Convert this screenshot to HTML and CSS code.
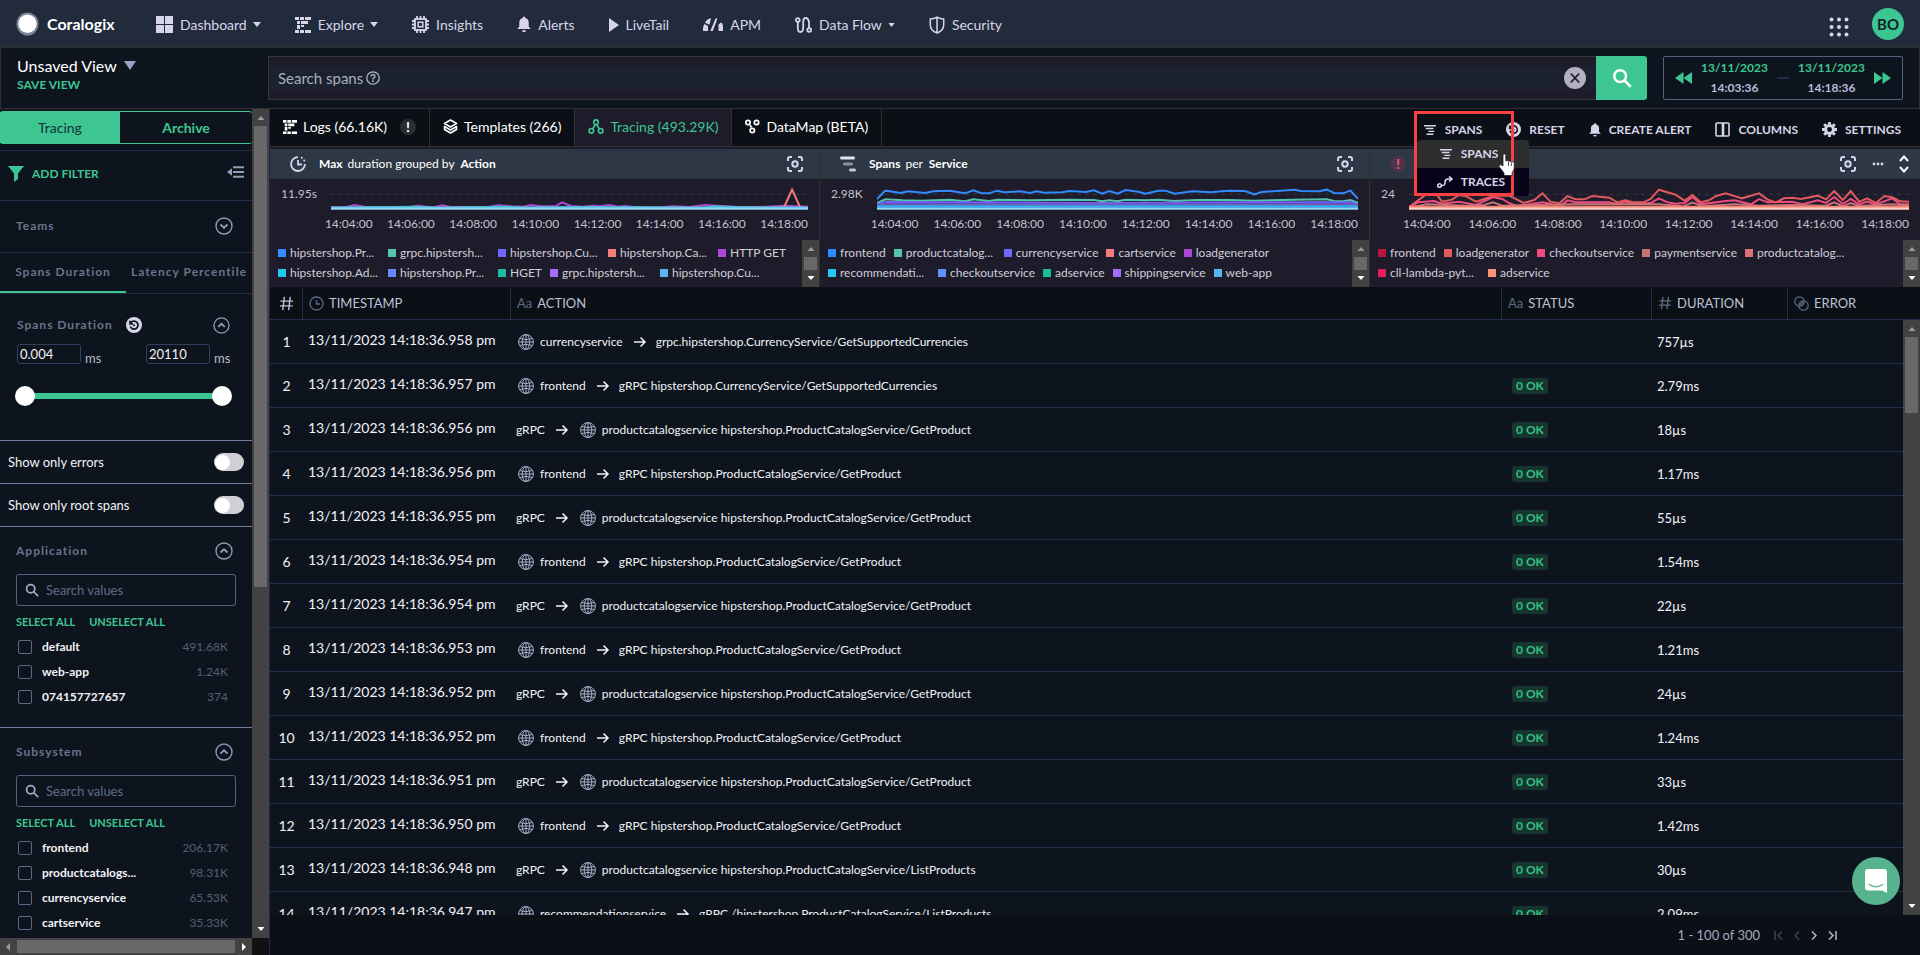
FILE: index.html
```html
<!DOCTYPE html>
<html lang="en">
<head>
<meta charset="utf-8">
<title>Coralogix - Tracing</title>
<link rel="stylesheet" href="styles.css">
</head>
<body>
<svg class="defs" aria-hidden="true">
  <symbol id="i-globe" viewBox="0 0 16 16"><g fill="none" stroke="currentColor"><circle cx="8" cy="8" r="7.400"/><ellipse cx="8" cy="8" rx="3.800" ry="7.400"/><path d="M8 1v14M1 8h14M2 4.600q6 2 12 0M2 11.400q6-2 12 0"/></g></symbol>
  <symbol id="i-arrow" viewBox="0 0 14 12"><path d="M1 6h11M7.500 1.500L12 6l-4.500 4.500" fill="none" stroke="currentColor" stroke-width="1.500"/></symbol>
  <symbol id="i-up" viewBox="0 0 18 18"><g fill="none" stroke="currentColor" stroke-width="1.400"><circle cx="9" cy="9" r="8"/><path d="M5.500 10.500L9 7.300l3.500 3.200" stroke-width="2"/></g></symbol>
  <symbol id="i-search" viewBox="0 0 16 16"><g fill="none" stroke="currentColor" stroke-width="2"><circle cx="6.500" cy="6.500" r="4.700"/><path d="M10 10l5 5"/></g></symbol>
  <symbol id="i-focus" viewBox="0 0 18 18"><g fill="none" stroke="currentColor" stroke-width="2"><path d="M2 6V4a2 2 0 0 1 2-2h2M12 2h2a2 2 0 0 1 2 2v2M16 12v2a2 2 0 0 1-2 2h-2M6 16H4a2 2 0 0 1-2-2v-2"/><circle cx="9" cy="9" r="2.700"/></g></symbol>
  <symbol id="i-logs" viewBox="0 0 16 16"><path fill="currentColor" d="M0 0h4v3H0zM5 0h4v3H5zM10 0h6v3h-6zM2 4h3v3H2zM6 4h7v3H6zM2 8h3v4H2zM6 8h3v2H6zM0 13h4v3H0zM5 13h4v3H5zM10 13h6v3h-6z"/></symbol>
  <symbol id="i-spans" viewBox="0 0 16 14"><path d="M1 2h14M3 5.300h9M6 8.600h7M4 12h8" stroke="currentColor" stroke-width="1.600"/></symbol>
  <symbol id="i-bell" viewBox="0 0 14 16"><path fill="currentColor" d="M7 0a1.300 1.300 0 0 1 1.300 1.500A4.600 4.600 0 0 1 11.700 6v4l2.100 2.500H.2L2.300 10V6a4.600 4.600 0 0 1 3.400-4.500A1.300 1.300 0 0 1 7 0zM5 13.700h4a2 2 0 0 1-4 0z"/></symbol>
  <symbol id="i-reset" viewBox="0 0 16 16"><circle cx="8" cy="8" r="8" fill="#d8d5ea"/><path d="M4.800 5.700A4 4 0 1 1 4.300 9.500M4 3.800v3h3" fill="none" stroke="#11151e" stroke-width="1.700"/><circle cx="8" cy="8.300" r="1" fill="#11151e"/></symbol>
  <symbol id="i-hash" viewBox="0 0 16 16"><path d="M5.700 1L4 15M12 1l-1.700 14M1.500 5.500h13.500M1 10.500h13.500" fill="none" stroke="currentColor" stroke-width="1.500"/></symbol>
  <symbol id="i-tri-up" viewBox="0 0 9 5"><path d="M0 5L4.500 0 9 5z" fill="#9a9a9a"/></symbol>
  <symbol id="i-tri-down" viewBox="0 0 9 5"><path d="M0 0h9L4.500 5z" fill="#fff"/></symbol>
  <symbol id="i-caret" viewBox="0 0 8 5"><path d="M0 0h8L4 5z" fill="currentColor"/></symbol>
</svg>

<header class="topbar">
  <a class="brand" href="#"><svg width="23" height="24" viewBox="0 0 23 24"><ellipse cx="11.500" cy="12" rx="11" ry="11.500" fill="#7b8492"/><circle cx="11.500" cy="11.800" r="9.200" fill="#fff"/></svg><span>Coralogix</span></a>
  <nav class="nav">
    <a href="#"><svg width="17" height="17" viewBox="0 0 17 17"><path fill="currentColor" d="M0 0h8v8H0zM9 0h8v8H9zM0 9h8v8H0zM9 9h8v8H9z"/></svg><span>Dashboard</span><svg class="caret" width="8" height="5"><use href="#i-caret"/></svg></a>
    <a href="#"><svg width="16" height="16"><use href="#i-logs"/></svg><span>Explore</span><svg class="caret" width="8" height="5"><use href="#i-caret"/></svg></a>
    <a href="#"><svg width="17" height="17" viewBox="0 0 17 17"><g fill="none" stroke="currentColor" stroke-width="1.800"><rect x="3" y="3" width="11" height="11"/><path d="M5 0v3M8.500 0v3M12 0v3M5 14v3M8.500 14v3M12 14v3M0 5h3M0 8.500h3M0 12h3M14 5h3M14 8.500h3M14 12h3"/></g><rect x="6.200" y="6.200" width="4.600" height="4.600" fill="none" stroke="currentColor" stroke-width="1.500"/></svg><span>Insights</span></a>
    <a href="#"><svg width="14" height="17"><use href="#i-bell"/></svg><span>Alerts</span></a>
    <a href="#"><svg width="10" height="14" viewBox="0 0 10 14"><path fill="currentColor" d="M0 0l10 7-10 7z"/></svg><span>LiveTail</span></a>
    <a href="#"><svg width="20" height="16" viewBox="0 0 20 16"><path fill="currentColor" d="M0 14a13 13 0 0 1 1.300-7L5 9v5zM2 5.800A8 8 0 0 1 8 1.200L6.500 7.800zM12.500 1.500h2L9.800 14H7.300zM15.500 7.500l3-2.200A12 12 0 0 1 20 14h-4.500z"/></svg><span>APM</span></a>
    <a href="#"><svg width="17" height="16" viewBox="0 0 17 16"><g fill="none" stroke="currentColor" stroke-width="1.800"><circle cx="2.800" cy="3" r="1.900"/><circle cx="14.200" cy="13" r="1.900"/><path d="M2.800 5v6q0 4 2.600 4T8.200 11V5q0-4 2.500-4t3.300 4v6"/></g></svg><span>Data Flow</span><svg class="caret" width="7" height="4" viewBox="0 0 8 5"><use href="#i-caret"/></svg></a>
    <a href="#"><svg width="16" height="18" viewBox="0 0 16 18"><path d="M8 1.200Q11 3 14.700 3v6q0 5.500-6.700 8Q1.300 14.500 1.300 9V3Q5 3 8 1.200zM8 1v16" fill="none" stroke="currentColor" stroke-width="1.500"/></svg><span>Security</span></a>
  </nav>
  <button class="apps" aria-label="Apps"><svg width="20" height="20" viewBox="0 0 20 20" fill="#d8d5ea"><circle cx="2.500" cy="2.500" r="2"/><circle cx="10" cy="2.500" r="2"/><circle cx="17.500" cy="2.500" r="2"/><circle cx="2.500" cy="10" r="2"/><circle cx="10" cy="10" r="2"/><circle cx="17.500" cy="10" r="2"/><circle cx="2.500" cy="17.500" r="2"/><circle cx="10" cy="17.500" r="2"/><circle cx="17.500" cy="17.500" r="2"/></svg></button>
  <button class="avatar">BO</button>
</header>

<section class="querybar">
  <div class="view">
    <button class="view-name">Unsaved View <svg width="12" height="9" viewBox="0 0 12 9"><path d="M0 0h12L6 9z" fill="#99a3c2"/></svg></button>
    <button class="save">SAVE VIEW</button>
  </div>
  <div class="search">
    <div class="search-inner">
      <input type="text" aria-label="Search spans" placeholder="Search spans">
      <svg width="14" height="14" viewBox="0 0 14 14"><g fill="none" stroke="#b4b9cc" stroke-width="1.300"><circle cx="7" cy="7" r="6.200"/><path d="M5 5.500Q5 3.600 7 3.600T9 5.400Q9 6.500 7 7.300V8.500"/></g><circle cx="7" cy="10.200" r=".9" fill="#b4b9cc"/></svg>
      <button class="clear" aria-label="Clear"><svg width="22" height="22" viewBox="0 0 22 22"><circle cx="11" cy="11" r="11" fill="#b2afc3"/><path d="M6.800 6.500l8.400 9M15.200 6.500l-8.400 9" stroke="#1c1c28" stroke-width="1.800"/></svg></button>
    </div>
  </div>
  <button class="go" aria-label="Search"><svg width="20" height="20" viewBox="0 0 16 16"><use href="#i-search"/></svg></button>
  <div class="range">
    <button aria-label="Earlier"><svg width="17" height="12" viewBox="0 0 17 12"><path d="M8.500 0v12L0 6zM17 0v12L8.500 6z" fill="#3dc691"/></svg></button>
    <div class="stamp"><span class="date">13/11/2023</span><span>14:03:36</span></div>
    <i class="dash"></i>
    <div class="stamp"><span class="date">13/11/2023</span><span>14:18:36</span></div>
    <button aria-label="Later"><svg width="17" height="12" viewBox="0 0 17 12"><path d="M0 0v12l8.500-6zM8.500 0v12L17 6z" fill="#3dc691"/></svg></button>
  </div>
</section>

<div class="workspace">
  <aside class="sidebar">
    <div class="filters">
      <div class="modes"><button class="on">Tracing</button><button>Archive</button></div>
      <div class="addrow">
        <button class="add"><svg width="16" height="16" viewBox="0 0 16 16"><path d="M0 0h16L10 7.500V13l-4 3V7.500z" fill="#3dc691"/></svg>ADD FILTER</button>
        <button aria-label="Collapse"><svg width="17" height="12" viewBox="0 0 17 12"><path d="M5 2.200v7.600L0 6z" fill="#8f9bb8"/><path d="M6 1.200h11M6 6h11M6 10.800h11" stroke="#8f9bb8" stroke-width="2"/></svg></button>
      </div>
      <div class="teams"><h3>Teams</h3><button aria-label="Expand"><svg class="flip" width="18" height="18"><use href="#i-up"/></svg></button></div>
      <div class="dtabs"><button class="on">Spans Duration</button><button>Latency Percentile</button></div>
      <div class="duration">
        <div class="dhead"><h3>Spans Duration</h3><button aria-label="Reset duration"><svg width="16" height="16"><use href="#i-reset"/></svg></button><button class="end" aria-label="Collapse"><svg width="17" height="17" viewBox="0 0 18 18"><use href="#i-up"/></svg></button></div>
        <div class="dinputs"><label><input type="text" value="0.004">ms</label><label><input type="text" value="20110">ms</label></div>
        <div class="slider"><input type="range" min="0" max="100" value="0" aria-label="Minimum duration"><input type="range" min="0" max="100" value="100" aria-label="Maximum duration"></div>
      </div>
      <label class="switch">Show only errors<input type="checkbox"></label>
      <label class="switch">Show only root spans<input type="checkbox"></label>
      <section class="facet">
        <div class="fhead"><h3>Application</h3><button aria-label="Collapse"><svg width="18" height="18"><use href="#i-up"/></svg></button></div>
        <div class="fsearch"><svg width="14" height="14" viewBox="0 0 16 16"><use href="#i-search"/></svg><input type="text" placeholder="Search values" aria-label="Search applications"></div>
        <div class="fsel"><button>SELECT ALL</button><button>UNSELECT ALL</button></div>
        <label class="opt"><input type="checkbox"><span>default</span><em>491.68K</em></label>
        <label class="opt"><input type="checkbox"><span>web-app</span><em>1.24K</em></label>
        <label class="opt"><input type="checkbox"><span>074157727657</span><em>374</em></label>
      </section>
      <section class="facet">
        <div class="fhead"><h3>Subsystem</h3><button aria-label="Collapse"><svg width="18" height="18"><use href="#i-up"/></svg></button></div>
        <div class="fsearch"><svg width="14" height="14" viewBox="0 0 16 16"><use href="#i-search"/></svg><input type="text" placeholder="Search values" aria-label="Search subsystems"></div>
        <div class="fsel"><button>SELECT ALL</button><button>UNSELECT ALL</button></div>
        <label class="opt"><input type="checkbox"><span>frontend</span><em>206.17K</em></label>
        <label class="opt"><input type="checkbox"><span>productcatalogs...</span><em>98.31K</em></label>
        <label class="opt"><input type="checkbox"><span>currencyservice</span><em>65.53K</em></label>
        <label class="opt"><input type="checkbox"><span>cartservice</span><em>35.33K</em></label>
      </section>
    </div>
    <div class="vbar side"><svg width="8" height="4" viewBox="0 0 9 5"><use href="#i-tri-up"/></svg><i class="thumb"></i><svg width="8" height="4" viewBox="0 0 9 5"><use href="#i-tri-down"/></svg></div>
    <div class="hbar"><svg width="4" height="8" viewBox="0 0 4 8"><path d="M4 0v8L0 4z" fill="#9a9a9a"/></svg><i></i><svg width="4" height="8" viewBox="0 0 4 8"><path d="M0 0v8l4-4z" fill="#fff"/></svg></div>
    <div class="corner"></div>
  </aside>

  <main class="main">
    <div class="tabbar">
      <nav class="tabs">
        <button><svg width="14" height="14" viewBox="0 0 16 16"><use href="#i-logs"/></svg>Logs (66.16K)<b class="bang">!</b></button>
        <button><svg width="15" height="15" viewBox="0 0 15 15"><path d="M7.500 1l6 3.500-6 3.500-6-3.500zM1.500 7.500v3l6 3.500 6-3.500v-3l-6 3.500z" fill="none" stroke="currentColor" stroke-width="1.600" stroke-linejoin="round"/></svg>Templates (266)</button>
        <button class="on"><svg width="16" height="15" viewBox="0 0 16 15"><g fill="none" stroke="currentColor" stroke-width="1.600"><circle cx="8" cy="3.200" r="2.300"/><circle cx="3.300" cy="11.800" r="2.300"/><circle cx="12.700" cy="11.800" r="2.300"/><path d="M7.300 5.500L5 9.500M8.700 5.500l2.300 4"/></g></svg>Tracing (493.29K)</button>
        <button><svg width="15" height="15" viewBox="0 0 15 15"><g fill="none" stroke="currentColor" stroke-width="1.700"><circle cx="3" cy="3.500" r="2.200"/><circle cx="11.500" cy="3.500" r="2.200"/><circle cx="7.300" cy="11.500" r="2.200"/><path d="M6.500 8.500L5 6"/></g></svg>DataMap (BETA)</button>
      </nav>
      <div class="actions">
        <div class="mode-pick">
          <button><svg width="14" height="12" viewBox="0 0 16 14"><use href="#i-spans"/></svg>SPANS</button>
          <div class="menu">
            <button class="hover"><svg width="14" height="12" viewBox="0 0 16 14"><use href="#i-spans"/></svg>SPANS</button>
            <button><svg width="16" height="12" viewBox="0 0 16 12"><g fill="none" stroke="currentColor" stroke-width="1.600"><circle cx="2.500" cy="9.500" r="1.800"/><path d="M4.500 9.500Q8 10 8 6.500T11 3h4M12 .5L15 3l-3 2.500"/></g></svg>TRACES</button>
          </div>
          <div class="marker"></div>
          <svg class="pointer" width="18" height="23" viewBox="0 0 18 23"><path d="M5 1.500Q6.500.3 7.800 1.500V8q1.500-1 2.700.3 1.700-.8 2.700.5 1.900-.6 3 .8V16l-2 3.500V22.500H6V20L1 13.500Q.8 11.500 3 11.700L5 13z" fill="#fff" stroke="#222" stroke-width=".8"/><path d="M10.500 9v4M13.300 9.500V13" stroke="#222" stroke-width=".8"/></svg>
        </div>
        <button><svg width="15" height="15" viewBox="0 0 16 16"><use href="#i-reset"/></svg>RESET</button>
        <button><svg width="12" height="14"><use href="#i-bell"/></svg>CREATE ALERT</button>
        <button><svg width="15" height="15" viewBox="0 0 15 15"><path d="M2 1h11a1 1 0 0 1 1 1v11a1 1 0 0 1-1 1H2a1 1 0 0 1-1-1V2a1 1 0 0 1 1-1zM7.500 1v13M8.500 1v13" fill="none" stroke="currentColor" stroke-width="1.600"/></svg>COLUMNS</button>
        <button><svg width="15" height="15" viewBox="0 0 16 16"><circle cx="8" cy="8" r="4.200" fill="none" stroke="currentColor" stroke-width="3.200"/><path d="M8 0v3M8 13v3M0 8h3M13 8h3M2.300 2.300l2 2M11.700 11.700l2 2M13.700 2.300l-2 2M4.300 11.700l-2 2" stroke="currentColor" stroke-width="3"/></svg>SETTINGS</button>
      </div>
    </div>

    <div class="panels">
      <section class="panel">
        <header><svg width="16" height="16" viewBox="0 0 16 16"><g fill="none" stroke="#d8d5ea" stroke-width="1.800"><path d="M8 1.200A6.900 6.900 0 1 0 14.900 8M8 4v4.500h4"/></g><circle cx="11.800" cy="1.800" r="1" fill="#d8d5ea"/><circle cx="14.200" cy="4.400" r="1" fill="#d8d5ea"/></svg><h2><b>Max</b> duration grouped by <b>Action</b></h2><button class="focus" aria-label="Focus"><svg width="18" height="18"><use href="#i-focus"/></svg></button></header>
        <div class="chart">
          <span class="ymax">11.95s</span>
          <div class="plot">
            <svg viewBox="196 141 1338 72" preserveAspectRatio="none"><path class="grid" d="M196 166H1534"/><polyline stroke="#b046d8" points="196,205 240,204 262,198 290,203 415,204 440,200 470,204 490,203 508,199 530,204 640,203 665,199 700,202 735,203 755,198 785,202 825,202 844,190 868,201 900,203 932,200 950,202 978,198 1000,203 1020,201 1050,205 1130,204 1155,202 1200,204 1245,198 1290,201 1330,203 1400,204 1468,200 1534,203"/><polyline stroke="#f47c7c" points="196,206 1466,206 1489,152 1512,206 1534,206"/><polyline stroke="#3fc0b0" points="196,206 430,203 500,206 680,203 740,206 880,204 1240,206 1270,202 1340,205 1534,206"/><path stroke="#5cc4f4" d="M196 206H1534"/><path stroke="#8dd9f8" d="M196 209H1534"/></svg>
            <div class="xaxis"><span>14:04:00</span><span>14:06:00</span><span>14:08:00</span><span>14:10:00</span><span>14:12:00</span><span>14:14:00</span><span>14:16:00</span><span>14:18:00</span></div>
          </div>
        </div>
        <div class="legend">
          <ul><li class="c-blue cut">hipstershop.Pr...</li><li class="c-mint cut">grpc.hipstersh...</li><li class="c-indigo cut">hipstershop.Cu...</li><li class="c-salmon cut">hipstershop.Ca...</li><li class="c-purple">HTTP GET</li></ul>
          <ul><li class="c-cyan cut">hipstershop.Ad...</li><li class="c-peri cut">hipstershop.Pr...</li><li class="c-teal">HGET</li><li class="c-violet cut">grpc.hipstersh...</li><li class="c-sky cut">hipstershop.Cu...</li></ul>
          <div class="vbar mini"><svg width="8" height="4" viewBox="0 0 9 5"><use href="#i-tri-up"/></svg><i class="thumb"></i><svg width="8" height="4" viewBox="0 0 9 5"><use href="#i-tri-down"/></svg></div>
        </div>
      </section>
      <section class="panel">
        <header><svg width="16" height="16" viewBox="0 0 16 16" stroke-width="3" stroke-linecap="round"><path d="M1.500 2h12" stroke="#e4e3ee"/><path d="M4.500 8h7" stroke="#8e95a3"/><path d="M10.500 14h4" stroke="#c8cad4"/></svg><h2><b>Spans</b> per <b>Service</b></h2><button class="focus" aria-label="Focus"><svg width="18" height="18"><use href="#i-focus"/></svg></button></header>
        <div class="chart">
          <span class="ymax">2.98K</span>
          <div class="plot">
            <svg viewBox="179 141 1328 72" preserveAspectRatio="none"><path class="grid" d="M179 166H1507"/><polyline stroke="#328cff" points="179,180 202,155 245,162 265,157 312,162 335,157 380,155 422,163 445,154 465,162 488,163 510,155 530,160 575,157 600,162 620,157 640,161 690,160 710,156 755,159 778,154 800,164 820,156 843,164 865,153 900,158 920,164 955,155 975,155 1000,164 1050,157 1100,160 1130,157 1150,155 1195,156 1220,166 1240,159 1330,152 1350,156 1400,157 1420,152 1440,162 1465,163 1485,155 1507,180"/><polyline stroke="#55c4ac" points="179,192 202,181 250,184 300,185 380,182 422,187 445,181 488,186 510,182 600,184 710,182 778,183 800,187 820,184 843,187 865,182 920,184 955,182 1000,186 1060,183 1150,183 1220,185 1330,182 1420,181 1440,186 1465,187 1485,183 1507,192"/><path stroke="#6c63ff" d="M179 196L202 189 400 190 800 192 1200 190 1485 190 1507 196"/><path stroke="#7a57c9" d="M179 196H1507"/><path stroke="#4a80c8" d="M179 200H1507"/><path stroke="#22c0ee" d="M179 203H1507"/><path stroke="#528fe8" d="M179 206H1507"/><path stroke="#8dd9f8" d="M179 209H1507"/></svg>
            <div class="xaxis"><span>14:04:00</span><span>14:06:00</span><span>14:08:00</span><span>14:10:00</span><span>14:12:00</span><span>14:14:00</span><span>14:16:00</span><span>14:18:00</span></div>
          </div>
        </div>
        <div class="legend">
          <ul><li class="c-blue">frontend</li><li class="c-mint cut">productcatalog...</li><li class="c-indigo">currencyservice</li><li class="c-salmon">cartservice</li><li class="c-purple">loadgenerator</li></ul>
          <ul><li class="c-cyan cut">recommendati...</li><li class="c-peri">checkoutservice</li><li class="c-teal">adservice</li><li class="c-violet">shippingservice</li><li class="c-sky">web-app</li></ul>
          <div class="vbar mini"><svg width="8" height="4" viewBox="0 0 9 5"><use href="#i-tri-up"/></svg><i class="thumb"></i><svg width="8" height="4" viewBox="0 0 9 5"><use href="#i-tri-down"/></svg></div>
        </div>
      </section>
      <section class="panel">
        <header><b class="alert">!</b><div class="tools"><button aria-label="Focus"><svg width="18" height="18"><use href="#i-focus"/></svg></button><button aria-label="More"><svg width="12" height="4" viewBox="0 0 12 4" fill="currentColor"><circle cx="2" cy="2" r="1.400"/><circle cx="6" cy="2" r="1.400"/><circle cx="10" cy="2" r="1.400"/></svg></button><button aria-label="Resize"><svg width="10" height="18" viewBox="0 0 10 18"><path d="M1 6l4-4.500L9 6M1 12l4 4.500L9 12" fill="none" stroke="#fff" stroke-width="2"/></svg></button></div></header>
        <div class="chart">
          <span class="ymax">24</span>
          <div class="plot">
            <svg viewBox="140 141 1397 72" preserveAspectRatio="none"><path class="grid" d="M140 166H1537"/><polyline stroke="#f04a80" points="140,206 165,190 210,186 232,194 280,188 327,198 375,174 400,180 420,192 440,201 513,190 535,194 560,203 583,184 605,190 700,190 722,196 745,188 765,196 815,192 838,178 862,190 885,194 910,192 932,174 955,196 1025,186 1050,184 1095,196 1118,180 1142,190 1210,188 1240,196 1282,184 1305,192 1328,174 1352,195 1374,180 1398,196 1420,188 1444,196 1490,178 1512,196 1537,196"/><polyline stroke="#c97474" points="140,206 190,196 300,200 350,198 375,190 400,200 513,198 600,196 745,196 838,196 905,202 932,191 960,202 1050,196 1118,200 1210,198 1305,200 1328,190 1352,202 1374,192 1398,201 1490,196 1537,200"/><polyline stroke="#e05a5e" points="140,204 190,165 213,160 232,188 260,182 280,168 300,172 327,188 350,180 380,170 420,170 460,192 490,183 513,163 535,188 560,193 583,171 605,181 630,181 652,171 700,176 722,190 745,184 765,190 795,190 815,180 838,152 885,167 910,185 932,168 955,190 978,184 998,171 1025,163 1070,178 1118,163 1142,182 1165,190 1187,178 1210,176 1235,180 1282,170 1305,181 1328,156 1352,183 1374,156 1398,188 1420,178 1444,192 1468,171 1490,175 1512,187 1537,188"/><path stroke="#f07878" d="M140 203H1537"/><path stroke="#ff9a80" d="M140 206H1537"/><path stroke="#ffcfc4" d="M140 209H1537"/></svg>
            <div class="xaxis"><span>14:04:00</span><span>14:06:00</span><span>14:08:00</span><span>14:10:00</span><span>14:12:00</span><span>14:14:00</span><span>14:16:00</span><span>14:18:00</span></div>
          </div>
        </div>
        <div class="legend">
          <ul><li class="c-crimson">frontend</li><li class="c-red">loadgenerator</li><li class="c-pink">checkoutservice</li><li class="c-rose">paymentservice</li><li class="c-coral cut">productcatalog...</li></ul>
          <ul><li class="c-hot cut">cll-lambda-pyt...</li><li class="c-peach">adservice</li></ul>
          <div class="vbar mini"><svg width="8" height="4" viewBox="0 0 9 5"><use href="#i-tri-up"/></svg><i class="thumb"></i><svg width="8" height="4" viewBox="0 0 9 5"><use href="#i-tri-down"/></svg></div>
        </div>
      </section>
    </div>

    <div class="grid-wrap">
      <table class="spans">
        <colgroup><col class="w-num"><col class="w-time"><col><col class="w-status"><col class="w-dur"><col class="w-err"></colgroup>
        <thead><tr>
          <th class="num"><svg width="15" height="15" viewBox="0 0 16 16"><use href="#i-hash"/></svg></th>
          <th><div><svg width="15" height="15" viewBox="0 0 15 15"><path d="M7.500 4v4h3.500" fill="none" stroke="currentColor" stroke-width="1.400"/><circle cx="7.500" cy="7.500" r="6.500" fill="none" stroke="currentColor" stroke-width="1.300"/></svg>TIMESTAMP</div></th>
          <th><div><i class="aa">Aa</i>ACTION</div></th>
          <th><div><i class="aa">Aa</i>STATUS</div></th>
          <th><div><svg width="14" height="14" viewBox="0 0 16 16"><use href="#i-hash"/></svg>DURATION</div></th>
          <th><div><svg width="15" height="15" viewBox="0 0 15 15"><g fill="none" stroke="currentColor" stroke-width="1.200"><circle cx="5.500" cy="5.500" r="4.700"/><circle cx="9.500" cy="9.500" r="4.700"/><path d="M5.500 9L9 5.500M7 10l3-3"/></g></svg>ERROR</div></th>
        </tr></thead>
        <tbody>
          <tr><td class="num">1</td><td class="time">13/11/2023 14:18:36.958 pm</td><td><div class="act"><svg class="globe"><use href="#i-globe"/></svg><span>currencyservice</span><svg class="to"><use href="#i-arrow"/></svg><span>grpc.hipstershop.CurrencyService/GetSupportedCurrencies</span></div></td><td></td><td>757µs</td><td></td></tr>
          <tr><td class="num">2</td><td class="time">13/11/2023 14:18:36.957 pm</td><td><div class="act"><svg class="globe"><use href="#i-globe"/></svg><span>frontend</span><svg class="to"><use href="#i-arrow"/></svg><span>gRPC hipstershop.CurrencyService/GetSupportedCurrencies</span></div></td><td><span class="ok">0 OK</span></td><td>2.79ms</td><td></td></tr>
          <tr><td class="num">3</td><td class="time">13/11/2023 14:18:36.956 pm</td><td><div class="act"><span>gRPC</span><svg class="to"><use href="#i-arrow"/></svg><svg class="globe"><use href="#i-globe"/></svg><span>productcatalogservice hipstershop.ProductCatalogService/GetProduct</span></div></td><td><span class="ok">0 OK</span></td><td>18µs</td><td></td></tr>
          <tr><td class="num">4</td><td class="time">13/11/2023 14:18:36.956 pm</td><td><div class="act"><svg class="globe"><use href="#i-globe"/></svg><span>frontend</span><svg class="to"><use href="#i-arrow"/></svg><span>gRPC hipstershop.ProductCatalogService/GetProduct</span></div></td><td><span class="ok">0 OK</span></td><td>1.17ms</td><td></td></tr>
          <tr><td class="num">5</td><td class="time">13/11/2023 14:18:36.955 pm</td><td><div class="act"><span>gRPC</span><svg class="to"><use href="#i-arrow"/></svg><svg class="globe"><use href="#i-globe"/></svg><span>productcatalogservice hipstershop.ProductCatalogService/GetProduct</span></div></td><td><span class="ok">0 OK</span></td><td>55µs</td><td></td></tr>
          <tr><td class="num">6</td><td class="time">13/11/2023 14:18:36.954 pm</td><td><div class="act"><svg class="globe"><use href="#i-globe"/></svg><span>frontend</span><svg class="to"><use href="#i-arrow"/></svg><span>gRPC hipstershop.ProductCatalogService/GetProduct</span></div></td><td><span class="ok">0 OK</span></td><td>1.54ms</td><td></td></tr>
          <tr><td class="num">7</td><td class="time">13/11/2023 14:18:36.954 pm</td><td><div class="act"><span>gRPC</span><svg class="to"><use href="#i-arrow"/></svg><svg class="globe"><use href="#i-globe"/></svg><span>productcatalogservice hipstershop.ProductCatalogService/GetProduct</span></div></td><td><span class="ok">0 OK</span></td><td>22µs</td><td></td></tr>
          <tr><td class="num">8</td><td class="time">13/11/2023 14:18:36.953 pm</td><td><div class="act"><svg class="globe"><use href="#i-globe"/></svg><span>frontend</span><svg class="to"><use href="#i-arrow"/></svg><span>gRPC hipstershop.ProductCatalogService/GetProduct</span></div></td><td><span class="ok">0 OK</span></td><td>1.21ms</td><td></td></tr>
          <tr><td class="num">9</td><td class="time">13/11/2023 14:18:36.952 pm</td><td><div class="act"><span>gRPC</span><svg class="to"><use href="#i-arrow"/></svg><svg class="globe"><use href="#i-globe"/></svg><span>productcatalogservice hipstershop.ProductCatalogService/GetProduct</span></div></td><td><span class="ok">0 OK</span></td><td>24µs</td><td></td></tr>
          <tr><td class="num">10</td><td class="time">13/11/2023 14:18:36.952 pm</td><td><div class="act"><svg class="globe"><use href="#i-globe"/></svg><span>frontend</span><svg class="to"><use href="#i-arrow"/></svg><span>gRPC hipstershop.ProductCatalogService/GetProduct</span></div></td><td><span class="ok">0 OK</span></td><td>1.24ms</td><td></td></tr>
          <tr><td class="num">11</td><td class="time">13/11/2023 14:18:36.951 pm</td><td><div class="act"><span>gRPC</span><svg class="to"><use href="#i-arrow"/></svg><svg class="globe"><use href="#i-globe"/></svg><span>productcatalogservice hipstershop.ProductCatalogService/GetProduct</span></div></td><td><span class="ok">0 OK</span></td><td>33µs</td><td></td></tr>
          <tr><td class="num">12</td><td class="time">13/11/2023 14:18:36.950 pm</td><td><div class="act"><svg class="globe"><use href="#i-globe"/></svg><span>frontend</span><svg class="to"><use href="#i-arrow"/></svg><span>gRPC hipstershop.ProductCatalogService/GetProduct</span></div></td><td><span class="ok">0 OK</span></td><td>1.42ms</td><td></td></tr>
          <tr><td class="num">13</td><td class="time">13/11/2023 14:18:36.948 pm</td><td><div class="act"><span>gRPC</span><svg class="to"><use href="#i-arrow"/></svg><svg class="globe"><use href="#i-globe"/></svg><span>productcatalogservice hipstershop.ProductCatalogService/ListProducts</span></div></td><td><span class="ok">0 OK</span></td><td>30µs</td><td></td></tr>
          <tr><td class="num">14</td><td class="time">13/11/2023 14:18:36.947 pm</td><td><div class="act"><svg class="globe"><use href="#i-globe"/></svg><span>recommendationservice</span><svg class="to"><use href="#i-arrow"/></svg><span>gRPC /hipstershop.ProductCatalogService/ListProducts</span></div></td><td><span class="ok">0 OK</span></td><td>2.09ms</td><td></td></tr>
        </tbody>
      </table>
      <div class="vbar rows"><svg width="8" height="4" viewBox="0 0 9 5"><use href="#i-tri-up"/></svg><i class="thumb"></i><svg width="8" height="4" viewBox="0 0 9 5"><use href="#i-tri-down"/></svg></div>
    </div>
    <footer class="pager">
      <span>1 - 100 of 300</span>
      <button disabled aria-label="First"><svg width="9" height="9" viewBox="0 0 9 9"><path d="M1 0v9M8 .5l-4 4 4 4"/></svg></button>
      <button disabled aria-label="Previous"><svg width="6" height="9" viewBox="0 0 6 9"><path d="M5 .5l-4 4 4 4"/></svg></button>
      <button aria-label="Next"><svg width="6" height="9" viewBox="0 0 6 9"><path d="M1 .5l4 4-4 4"/></svg></button>
      <button aria-label="Last"><svg width="9" height="9" viewBox="0 0 9 9"><path d="M8 0v9M1 .5l4 4-4 4"/></svg></button>
    </footer>
  </main>
</div>
<button class="chat" aria-label="Open chat"><svg width="22" height="24" viewBox="0 0 22 24"><path d="M3 0h16a3 3 0 0 1 3 3v21l-5-2.500H3a3 3 0 0 1-3-3V3a3 3 0 0 1 3-3z" fill="#fff"/><path d="M4 15.500q7 4.500 14 0" fill="none" stroke="#56b38d" stroke-width="1.300" stroke-linecap="round"/></svg></button>
</body>
</html>
```
FILE: styles.css
```css
:root {
  --green: #3dc691;
  --bg: #0d141d;
  --dark: #0b0f16;
  --plum: #1e1b2b;
  --rule: #232f4c;
  --edge: #303030;
  --soft: #d8d5ea;
  --muted: #6a748c;
}
* { box-sizing: border-box; }
body {
  margin: 0;
  height: 100vh;
  display: flex;
  flex-direction: column;
  overflow: hidden;
  background: var(--bg);
  color: #f2f2f6;
  font: 13px/16px Lato, "Open Sans", sans-serif;
}
button {
  margin: 0;
  padding: 0;
  border: 0;
  background: none;
  color: inherit;
  font: inherit;
  letter-spacing: inherit;
  display: flex;
  align-items: center;
  justify-content: center;
  flex: none;
}
input { font: inherit; color: inherit; margin: 0; }
a { color: inherit; text-decoration: none; }
h2, h3, ul { margin: 0; padding: 0; font: inherit; }
svg { flex: none; display: block; }
.defs { position: absolute; width: 0; height: 0; }

/* top bar */
.topbar {
  flex: none;
  display: flex;
  align-items: center;
  height: 48px;
  padding: 0 16px;
  background: #212b3c;
  border-bottom: 1px solid var(--edge);
}
.brand { display: flex; align-items: center; gap: 8px; font-size: 16px; font-weight: 700; color: #fff; width: 140px; }
.nav { display: flex; gap: 34px; flex: 1; color: var(--soft); font-size: 14px; padding-top: 2px; }
.nav a { display: flex; align-items: center; gap: 7px; }
.nav .caret { margin-left: -1px; }
.apps { margin-right: 23px; padding-top: 6px; }
.avatar { width: 32px; height: 32px; border-radius: 50%; background: var(--green); color: #10202c; font-size: 15px; font-weight: 700; }

/* query bar */
.querybar {
  flex: none;
  display: flex;
  align-items: center;
  height: 61px;
  padding-right: 16px;
  border: 1px solid var(--edge);
  border-top: 0;
}
.view { width: 267px; padding: 0 0 8px 16px; display: flex; flex-direction: column; align-items: flex-start; gap: 1px; }
.view-name { font-size: 16px; line-height: 20px; gap: 7px; color: #fff; }
.save { font-size: 12px; color: var(--green); font-weight: 700; }
.search { flex: 1; height: 44px; border: 1px solid #363636; border-right: 0; background: var(--plum); display: flex; align-items: center; }
.search-inner { flex: 1; display: flex; align-items: center; height: 24px; background: #1c222d; padding: 0 10px 0 9px; }
.search-inner input { width: 88px; padding: 0; border: 0; background: none; font-size: 15px; outline: 0; }
.search-inner input::placeholder { color: #a8adc0; opacity: 1; }
.clear { margin-left: auto; }
.go { width: 51px; height: 44px; background: var(--green); border-radius: 0 3px 3px 0; color: #fff; }
.range {
  display: flex;
  align-items: center;
  justify-content: space-between;
  width: 240px;
  height: 44px;
  margin-left: 16px;
  padding: 0 11px;
  border: 1px solid #53637f;
  border-radius: 2px;
}
.stamp { display: flex; flex-direction: column; align-items: center; gap: 4px; font-size: 12px; color: #b7bbd8; font-weight: 700; }
.stamp .date { color: var(--green); }
.dash { width: 12px; height: 2px; background: #232b4b; }

/* sidebar */
.workspace { flex: 1; display: flex; min-height: 0; }
.sidebar {
  flex: none;
  display: grid;
  grid-template: minmax(0, 1fr) 17px / 252px 17px;
}
.filters { overflow: hidden; min-height: 0; }
.modes { display: flex; margin-top: 2px; height: 33px; border: 1px solid var(--green); border-width: 1px 0; border-radius: 3px; font-size: 14px; color: var(--green); font-weight: 700; }
.modes button { flex: 1; }
.modes button.on { flex: none; width: 120px; background: var(--green); color: #15303a; font-weight: 400; }
.addrow { display: flex; align-items: center; justify-content: space-between; height: 51px; margin-top: 6px; padding: 0 8px 4px; border: 1px solid var(--rule); border-width: 1px 0; }
.addrow button:last-child { padding-bottom: 3px; }
.add { gap: 8px; font-size: 12px; font-weight: 700; color: var(--green); }
.filters h3, .dtabs { letter-spacing: 1px; color: var(--muted); font-weight: 700; font-size: 12px; }
.filters .teams, .duration, .fhead { color: #8d9ab8; }
.teams { display: flex; align-items: center; justify-content: space-between; height: 52px; padding: 0 19px 2px 16px; border-bottom: 1px solid var(--rule); }
.flip { rotate: 180deg; }
.dtabs { display: flex; height: 41px; border-bottom: 1px solid var(--rule); }
.dtabs button { flex: 1; border-bottom: 2px solid transparent; white-space: nowrap; }
.dtabs button.on { border-color: var(--green); }
.duration { height: 146px; padding: 21px 20px 0 15px; }
.dhead { display: flex; align-items: center; gap: 13px; height: 20px; padding-left: 2px; }
.dhead .end { margin-left: auto; margin-right: 2px; }
.dinputs { display: flex; gap: 45px; margin: 9px 0 20px 2px; color: #b9bccb; }
.dinputs label { display: flex; align-items: flex-end; gap: 4px; height: 22px; width: 84px; }
.dinputs input { width: 64px; height: 20px; align-self: flex-start; padding: 0 2px; border: 1px solid #2f3f60; border-radius: 3px; background: none; color: #f2f2f6; }
.slider { display: grid; height: 20px; }
.slider input { grid-area: 1 / 1; appearance: none; width: 100%; height: 20px; background: linear-gradient(var(--green), var(--green)) center / 197px 6px no-repeat; pointer-events: none; }
.slider input::-webkit-slider-thumb { appearance: none; width: 20px; height: 20px; border-radius: 50%; background: #fff; pointer-events: auto; }
.slider input:last-child { background: none; }
.switch { display: flex; align-items: center; justify-content: space-between; height: 43px; padding: 0 8px; border-top: 1px solid #6f7c9b; }
.switch input { appearance: none; width: 30px; height: 18px; border-radius: 9px; background: #d0cfd6; display: flex; align-items: center; padding-left: 1px; }
.switch input::before { content: ""; width: 15px; height: 15px; border-radius: 50%; background: #fff; }
.facet { padding: 12px 16px 18px; border-top: 1px solid #6f7c9b; }
.fhead { display: flex; justify-content: space-between; align-items: center; height: 24px; padding-right: 3px; }
.fsearch { display: flex; align-items: center; gap: 7px; height: 32px; margin-top: 11px; padding: 0 8px; border: 1px solid #53637f; border-radius: 3px; color: #a3acc4; }
.fsearch input { flex: 1; min-width: 0; padding: 0; border: 0; background: none; outline: 0; }
.fsearch input::placeholder { color: #5f6d88; opacity: 1; }
.fsel { display: flex; gap: 14px; height: 28px; padding-top: 3px; font-size: 11px; font-weight: 700; color: var(--green); }
.opt { display: flex; align-items: center; gap: 10px; height: 25px; padding: 0 8px 0 2px; font-size: 12px; font-weight: 700; }
.opt input { appearance: none; width: 14px; height: 14px; border: 1px solid #5a6a86; border-radius: 2px; }
.opt em { margin-left: auto; font-style: normal; font-weight: 400; color: #555f75; }

/* scroll bars */
.vbar { display: flex; flex-direction: column; align-items: center; width: 17px; padding: 7px 0; background: #424242; }
.vbar .thumb { width: 13px; background: #686868; margin: 6px 0 auto; }
.side .thumb { height: 461px; }
.hbar { display: flex; align-items: center; background: #424242; padding: 0 6px; gap: 7px; }
.hbar i { flex: 1; height: 13px; background: #686868; }
.corner { background: #111; }

/* main column */
.main { flex: 1; min-width: 0; display: flex; flex-direction: column; border-left: 1px solid #1f2a45; }
.tabbar { flex: none; display: flex; justify-content: space-between; height: 38px; background: var(--dark); border-bottom: 1px solid var(--edge); }
.tabs { display: flex; font-size: 14px; }
.tabs button { gap: 6px; padding: 0 13px 2px; border-right: 1px solid var(--edge); color: #fff; }
.tabs .on { background: var(--plum); color: var(--green); }
.bang { width: 16px; height: 16px; margin-left: 7px; border-radius: 50%; background: #2b2d33; text-align: center; }
.actions { display: flex; gap: 24px; padding: 4px 19px 0 0; color: var(--soft); font-size: 12px; font-weight: 700; }
.actions button { gap: 8px; }
.mode-pick { position: relative; display: flex; }
.menu { position: absolute; z-index: 2; left: -6px; top: 27px; width: 112px; border-radius: 4px; overflow: hidden; background: #080318; }
.menu button { width: 100%; height: 28px; justify-content: flex-start; padding-left: 20px; }
.menu .hover { background: #2e2e2e; padding-left: 22px; }
.marker { position: absolute; z-index: 3; left: -9px; top: -2px; width: 100px; height: 85px; border: 3px solid #f94144; }
.pointer { position: absolute; z-index: 4; left: 75px; top: 40px; }

/* chart panels */
.panels { flex: none; display: grid; grid-template-columns: repeat(3, 1fr); background: var(--plum); padding-top: 2px; }
.panel { min-width: 0; border-right: 1px solid var(--edge); }
.panel:last-child { border-right: 0; }
.panel header { display: flex; align-items: center; height: 30px; padding: 0 15px 0 20px; background: #2d3745; border-bottom: 1px solid var(--edge); color: var(--soft); }
.panel h2 { margin-left: 13px; color: #fff; font-size: 12px; }
.panel h2 b:first-child { margin-right: 2px; }
.panel h2 b:last-child { margin-left: 3px; }
.focus { margin-left: auto; }
.alert { width: 16px; height: 16px; border-radius: 50%; background: #4a3549; color: #ff5a80; text-align: center; }
.tools { display: flex; gap: 15px; margin-left: auto; margin-right: -4px; }
.chart { display: flex; gap: 14px; height: 60px; padding: 7px 11px 0; color: #c3c3cd; font-size: 12px; }
.plot { flex: 1; min-width: 0; }
.plot > svg { width: 100%; height: 24px; }
.plot svg polyline, .plot svg path { fill: none; stroke-width: 2; vector-effect: non-scaling-stroke; }
.plot svg .grid { stroke: #393946; stroke-width: 1; stroke-dasharray: 4 4; }
.xaxis { display: flex; margin: 6px 0 0 -6px; }
.xaxis span { flex: 1; }
.xaxis span:last-child { flex: none; }
.legend { position: relative; height: 48px; padding: 4px 0 0 8px; font-size: 12px; color: #cfcfd8; }
.legend ul { display: flex; gap: 8px; height: 20px; align-items: center; }
.legend li { display: flex; align-items: center; gap: 4px; white-space: nowrap; }
.legend li::before { content: ""; width: 8px; height: 8px; background: var(--c); }
.legend .cut { width: 102px; }
.mini { position: absolute; right: 0; top: 1px; height: 47px; }
.mini .thumb { height: 13px; }
.c-blue { --c: #328cff; } .c-mint { --c: #55c4ac; } .c-indigo { --c: #6f68ff; } .c-salmon { --c: #f47c7c; } .c-purple { --c: #b046d8; }
.c-cyan { --c: #20c8f0; } .c-peri { --c: #648cff; } .c-teal { --c: #1abc9c; } .c-violet { --c: #a56bff; } .c-sky { --c: #5ab4f0; }
.c-crimson { --c: #b81640; } .c-red { --c: #e05a5e; } .c-pink { --c: #f04a80; } .c-rose { --c: #c97474; } .c-coral { --c: #e07078; }
.c-hot { --c: #e01e5a; } .c-peach { --c: #fa9478; }

/* spans table */
.grid-wrap { position: relative; flex: 1; min-height: 0; overflow: hidden; }
.spans { width: 100%; table-layout: fixed; border-spacing: 0; }
.w-num { width: 33px; } .w-time { width: 208px; } .w-status { width: 150px; } .w-dur { width: 136px; } .w-err { width: 132px; }
.spans th { height: 33px; padding: 0 6px; background: var(--dark); border-right: 1px solid var(--rule); border-bottom: 1px solid var(--rule); color: #bcc2d8; font-weight: 400; text-align: left; }
.spans th:last-child { border-right: 0; }
.spans th div { display: flex; align-items: center; gap: 5px; }
.spans th svg, .aa { color: #5d6b88; font-style: normal; }
.spans th.num svg { color: #bcc2d8; margin: auto; }
.spans td { height: 44px; padding: 0 5px; border-bottom: 1px solid var(--rule); white-space: nowrap; }
.spans .num { text-align: center; padding: 0; font-size: 14px; }
.spans .time { font-size: 14px; padding-bottom: 3px; }
.act { display: flex; align-items: center; font-size: 12px; }
.globe { width: 16px; height: 16px; margin: 0 6px 0 2px; color: #a6b0c9; }
.to { width: 14px; height: 12px; margin: 0 9px 0 10px; }
.ok { display: inline-block; margin-left: 5px; padding: 0 4px; border-radius: 3px; background: #17352f; color: #35c083; font-weight: 700; font-size: 12px; }
.rows { position: absolute; right: 0; top: 33px; bottom: 0; }
.rows .thumb { height: 76px; }

.pager { flex: none; display: flex; align-items: center; height: 40px; padding-right: 83px; justify-content: flex-end; gap: 11px; background: var(--dark); color: #a3a9c2; }
.pager span { margin-right: 3px; }
.pager path { fill: none; stroke: #b8bccb; stroke-width: 1.500; }
.pager button:disabled path { stroke: #3a4259; }
.chat { position: fixed; right: 20px; bottom: 50px; z-index: 5; width: 48px; height: 48px; border-radius: 50%; background: #56b38d; }
```
